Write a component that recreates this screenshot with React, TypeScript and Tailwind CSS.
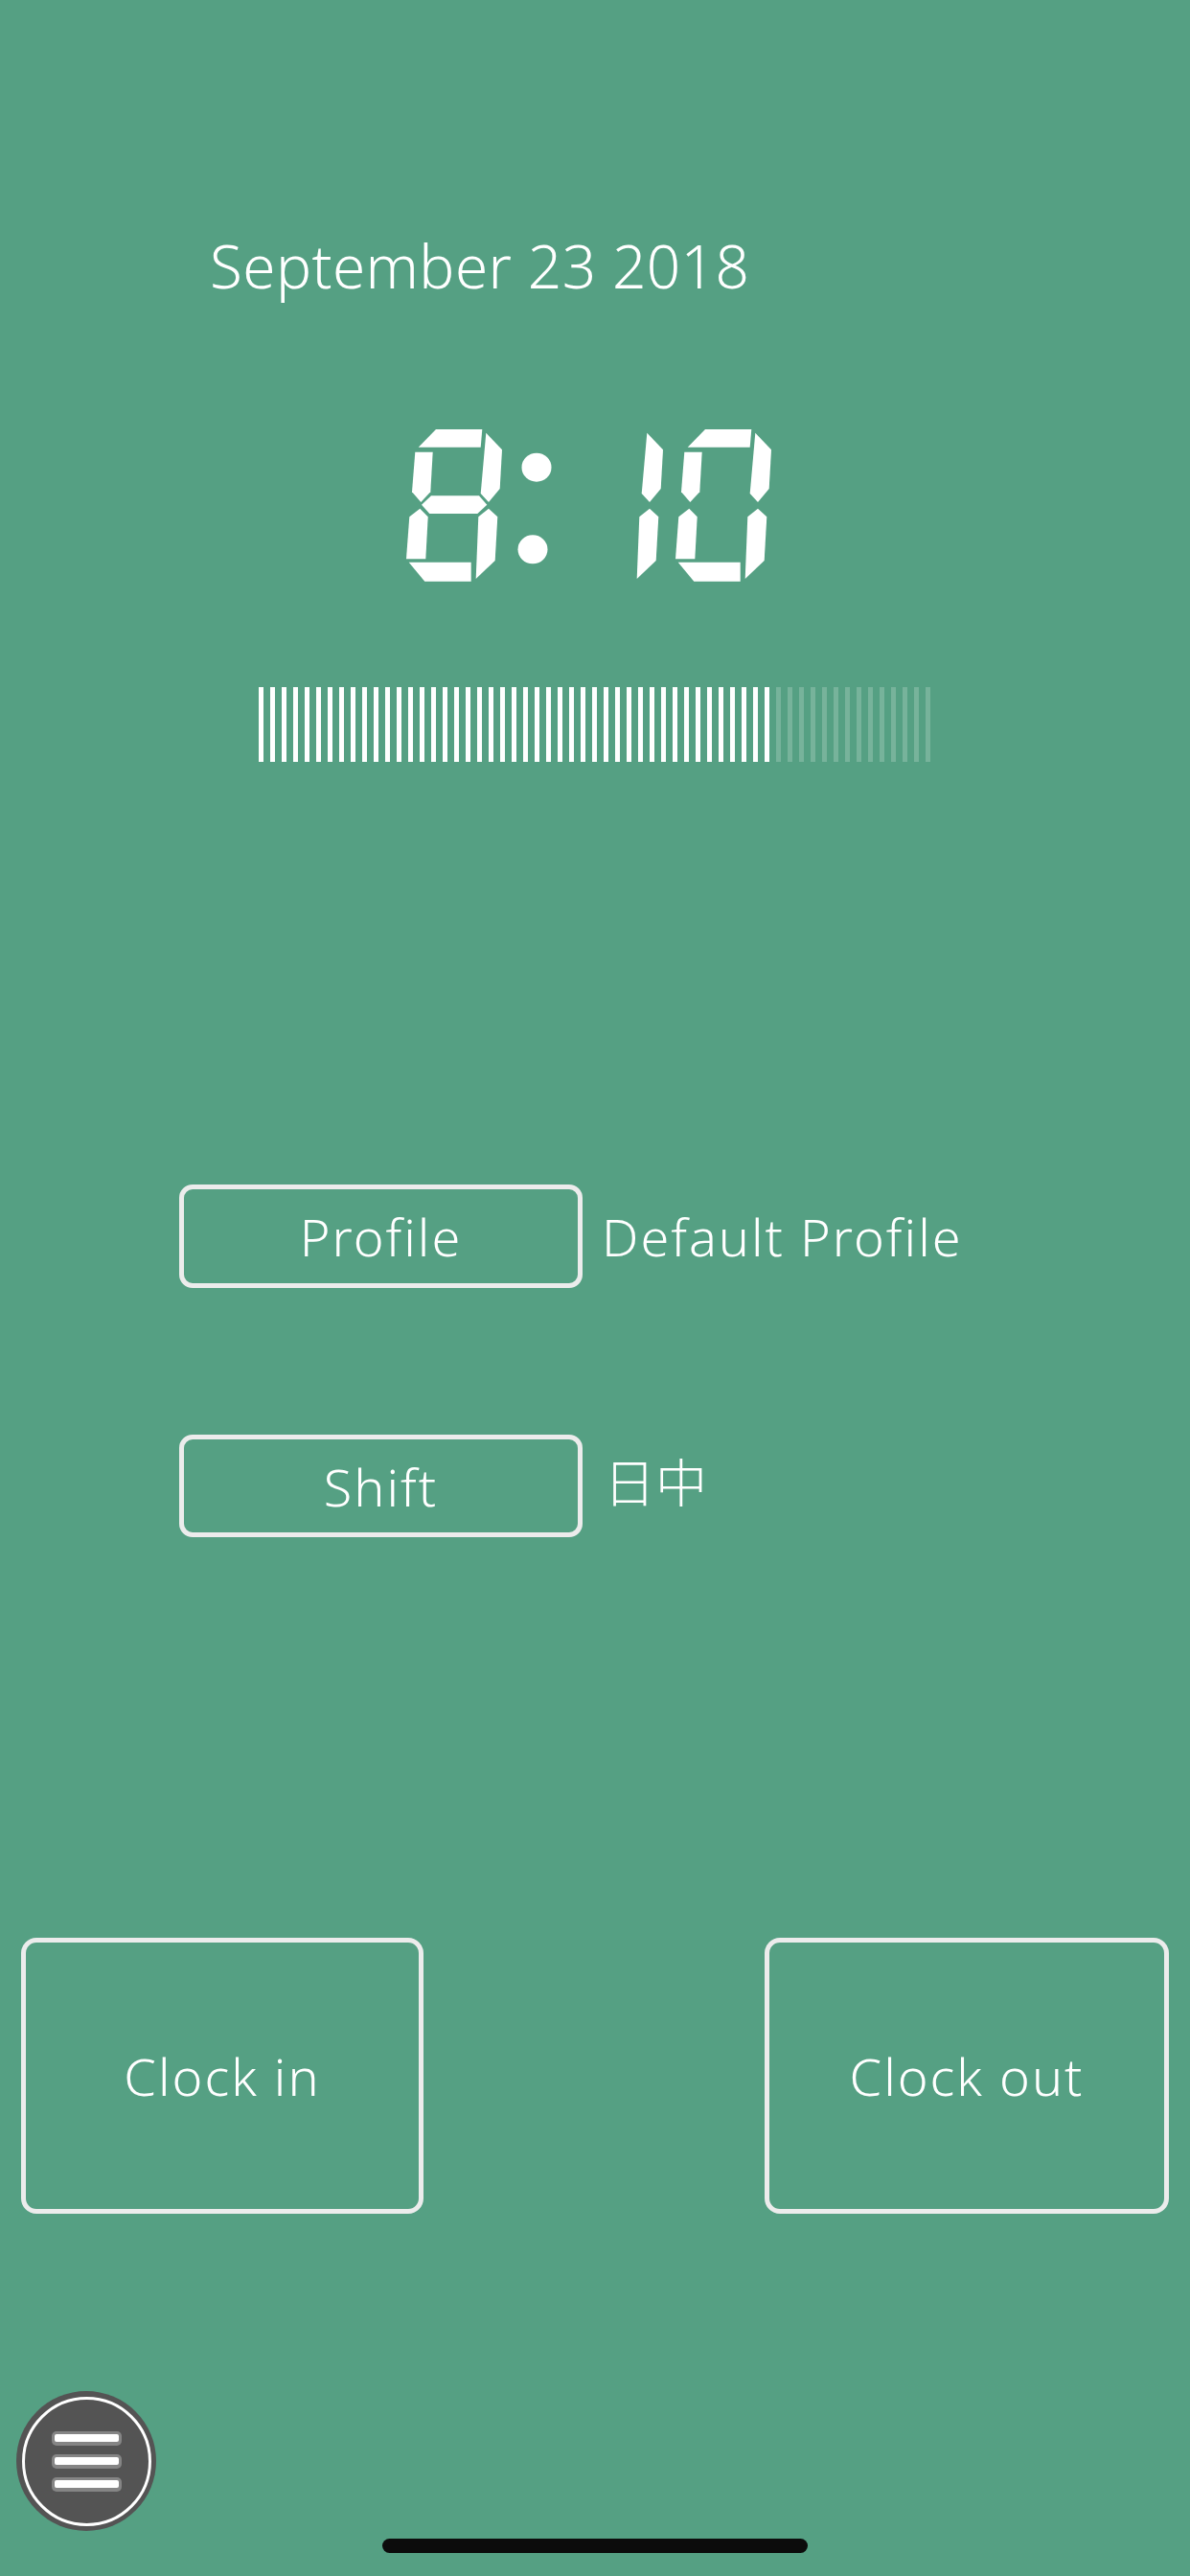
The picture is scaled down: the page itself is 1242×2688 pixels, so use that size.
import React from 'react';

// seven-segment shapes, local coords of one digit cell (slanted already)
const SEGMENTS: Record<string, string> = {
  a: '31,0 79.3,0 77.7,18.7 12.7,18.7',
  b: '83.3,3.7 100,21.3 97.7,62 86,76 77.7,67',
  c: '86,82.7 95.3,91.3 92.7,137 72.7,156 75.3,91.3',
  d: '2.7,138.7 67.7,138.7 67.7,158.7 19.3,158.7',
  e: '14.3,82.7 22.7,91.3 20.3,135.3 0,135.3 3.3,91.3',
  f: '9.3,23.7 27.7,23.7 25.3,65.3 15.3,76 6,65.3',
  g: '16,78.7 26,69.3 76,69.3 84.3,78.7 74.3,88 24.3,88',
};

const DIGITS: Record<string, string> = {
  '0': 'abcdef',
  '1': 'bc',
  '2': 'abged',
  '3': 'abgcd',
  '4': 'fgbc',
  '5': 'afgcd',
  '6': 'afgedc',
  '7': 'abc',
  '8': 'abcdefg',
  '9': 'abcdfg',
};

const time = { hours: '8', minutes: '10' };
const progress = { total: 59, filled: 45 };

function Digit({ value, x }: { value: string; x: number }) {
  const segs = DIGITS[value] ?? '';
  return (
    <g transform={`translate(${x} 448)`}>
      {segs.split('').map((s) => (
        <polygon key={s} points={SEGMENTS[s]} fill="#ffffff" />
      ))}
    </g>
  );
}

function SegmentClock() {
  const h = time.hours.padStart(2, ' ');
  return (
    <svg width={400} height={170} viewBox="414 440 400 170" className="block ml-[414px]" aria-label={`${time.hours}:${time.minutes}`}>
      <Digit value={h[0]} x={311} />
      <Digit value={h[1]} x={424} />
      <ellipse cx={560} cy={487.7} rx={15.5} ry={15} fill="#ffffff" />
      <ellipse cx={556} cy={573.3} rx={15.5} ry={15} fill="#ffffff" />
      <Digit value={time.minutes[0]} x={592} />
      <Digit value={time.minutes[1]} x={705} />
    </svg>
  );
}

function OutlineButton({ label, className }: { label: string; className: string }) {
  return (
    <button
      className={`flex items-center justify-center border-[5px] border-[#ececec] text-white text-[54px] leading-none tracking-[2px] ${className}`}
    >
      {label}
    </button>
  );
}

export default function App() {
  return (
    <div
      className="relative w-[1242px] h-[2688px] overflow-hidden bg-[#55a083] text-white font-light flex flex-col"
      style={{ fontFamily: '"Noto Sans", "Noto Sans CJK JP", sans-serif' }}
    >
      {/* Date */}
      <div className="pt-[246px] pl-[219px] text-[62px] leading-none tracking-[0.4px]">September 23 2018</div>

      {/* Time */}
      <div className="mt-[132px]">
        <SegmentClock />
      </div>

      {/* Progress ticks */}
      <div className="mt-[107px] ml-[270px] flex gap-[7px]">
        {Array.from({ length: progress.total }).map((_, i) => (
          <div key={i} className={`w-[5px] h-[78px] ${i < progress.filled ? 'bg-white' : 'bg-white/20'}`} />
        ))}
      </div>

      {/* Profile */}
      <div className="mt-[441px] ml-[187px] flex items-center">
        <OutlineButton label="Profile" className="w-[421px] h-[108px] rounded-[14px]" />
        <span className="ml-[20px] text-[54px] leading-none tracking-[2px]">Default Profile</span>
      </div>

      {/* Shift */}
      <div className="mt-[153px] ml-[187px] flex items-center">
        <OutlineButton label="Shift" className="w-[421px] h-[107px] rounded-[14px]" />
        <span className="ml-[22px] -mt-[8px] text-[54px] leading-none">日中</span>
      </div>

      {/* Clock in / out */}
      <div className="mt-[418px] px-[22px] flex justify-between">
        <OutlineButton label="Clock in" className="w-[420px] h-[288px] rounded-[16px]" />
        <OutlineButton label="Clock out" className="w-[422px] h-[288px] rounded-[16px]" />
      </div>

      {/* Menu */}
      <div className="mt-[185px] ml-[17px]">
        <button className="w-[146px] h-[146px] rounded-full bg-[#545454] flex items-center justify-center">
          <div className="w-[135px] h-[135px] rounded-full border-[3px] border-white flex flex-col items-center justify-center gap-[9px]">
            {[0, 1, 2].map((i) => (
              <div key={i} className="w-[73px] h-[15px] rounded-[5px] bg-[#858585] flex items-center justify-center">
                <div className="w-[67px] h-[8px] rounded-[2px] bg-white" />
              </div>
            ))}
          </div>
        </button>
      </div>

      {/* Home indicator */}
      <div className="absolute left-[399px] top-[2649px] w-[444px] h-[15px] rounded-full bg-[#0c0c0c]" />
    </div>
  );
}
